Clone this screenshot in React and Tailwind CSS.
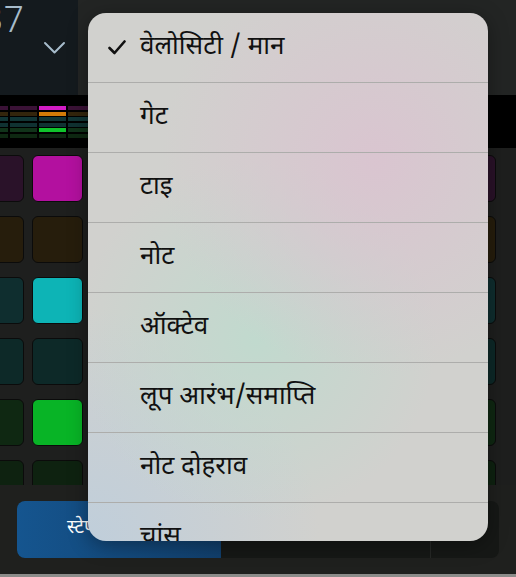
import React from "react";

const padRows = [
  { dim: "bg-[#2a1229]", lit: "bg-[#b3109f]", litCol: 1 },
  { dim: "bg-[#261d0c]", lit: null, litCol: -1 },
  { dim: "bg-[#0f2e2f]", lit: "bg-[#0db4b6]", litCol: 1 },
  { dim: "bg-[#0d2928]", lit: null, litCol: -1 },
  { dim: "bg-[#0f2812]", lit: "bg-[#08b426]", litCol: 1 },
  { dim: "bg-[#0e2210]", lit: null, litCol: -1 },
];

const meterRows = [
  { dim: "bg-[#3a1236]", lit: "bg-[#d21cc4]" },
  { dim: "bg-[#33250c]", lit: "bg-[#d27a08]" },
  { dim: "bg-[#113636]", lit: "bg-[#113636]" },
  { dim: "bg-[#103232]", lit: "bg-[#103232]" },
  { dim: "bg-[#11331a]", lit: "bg-[#10c42c]" },
  { dim: "bg-[#0e2812]", lit: "bg-[#0e2812]" },
];

const items = [
  "वेलोसिटी / मान",
  "गेट",
  "टाइ",
  "नोट",
  "ऑक्टेव",
  "लूप आरंभ/समाप्ति",
  "नोट दोहराव",
  "चांस",
];

export default function App() {
  return (
    <div
      className="relative w-[516px] h-[577px] overflow-hidden bg-[#1e1f1e] flex flex-col"
      style={{ fontFamily: '"Noto Sans Devanagari", "Lohit Devanagari", "Noto Sans", "Liberation Sans", sans-serif' }}
    >
      {/* header */}
      <div className="flex h-[95px] shrink-0">
        <div className="relative w-[78px] h-full bg-[#141a1e] overflow-hidden">
          <div className="ml-[-17px] mt-[5px] text-[37px] leading-[37px] font-light text-[#a7bccb]">37</div>
          <svg className="absolute left-[43px] top-[40px]" width="23" height="15" viewBox="0 0 23 15">
            <path d="M2 3 L11.5 12.5 L21 3" fill="none" stroke="#a7bccb" strokeWidth="2" strokeLinecap="round" strokeLinejoin="round" />
          </svg>
        </div>
        <div className="flex-1 bg-[#232524]" />
      </div>

      {/* meter strip */}
      <div className="h-[53px] shrink-0 bg-black flex pt-[11px] gap-[2px] ml-[-19px]">
        {[0, 1, 2, 3].map((c) => (
          <div key={c} className="w-[27px] flex flex-col gap-[1.6px]">
            {meterRows.map((r, i) => (
              <div key={i} className={`h-[4px] ${c === 2 ? r.lit : r.dim}`} />
            ))}
          </div>
        ))}
      </div>

      {/* pads */}
      <div className="h-[337px] shrink-0 overflow-hidden flex flex-col gap-[14px] pt-[7px] ml-[-27px]">
        {padRows.map((r, ri) => (
          <div key={ri} className="flex gap-[8px] shrink-0">
            {Array.from({ length: 9 }).map((_, ci) => (
              <div
                key={ci}
                className={`w-[51px] h-[47px] shrink-0 rounded-[6px] border-[1.5px] border-[#0b0b0b] ${ci === r.litCol ? r.lit : r.dim}`}
              />
            ))}
          </div>
        ))}
      </div>

      {/* bottom bar */}
      <div className="flex-1 bg-[#1f201e] pt-[16px] px-[17px]">
        <div className="h-[57px] rounded-[8px] bg-[#161816] flex overflow-hidden">
          <div className="w-[204px] bg-gradient-to-r from-[#15558f] to-[#113f6c] flex items-center pl-[50px] text-white text-[19px]">
            स्टेप
          </div>
          <div className="flex-1" />
          <div className="w-px bg-[#262826]" />
          <div className="w-[68px]" />
        </div>
      </div>
      <div className="h-[3px] shrink-0 bg-[#8c8c8a]" />

      {/* menu */}
      <div
        className="absolute left-[88px] top-[13px] w-[400px] h-[528px] rounded-[18px] overflow-hidden shadow-[0_4px_20px_rgba(0,0,0,0.35)]"
        style={{
          background:
            "radial-gradient(circle at 72% 28%, rgba(218,196,208,0.95) 0%, rgba(218,196,208,0) 45%), radial-gradient(circle at 42% 62%, rgba(192,218,206,0.95) 0%, rgba(192,218,206,0) 45%), radial-gradient(circle at 0% 100%, rgba(190,206,220,0.9) 0%, rgba(190,206,220,0) 35%), #d1d1ce",
        }}
      >
        {items.map((t, i) => (
          <div
            key={i}
            className={`flex items-center ${i === 0 ? "h-[69px]" : "h-[70px] border-t border-[#adadab]"} shrink-0`}
          >
            <div className="w-[52px] flex justify-end pr-[14px]">
              {i === 0 && (
                <svg width="18" height="15" viewBox="0 0 18 15">
                  <path d="M1.5 8 L6.5 13 L16.5 1.5" fill="none" stroke="#111" strokeWidth="2.6" strokeLinecap="round" strokeLinejoin="round" />
                </svg>
              )}
            </div>
            <span className="text-[26px] text-[#111] leading-none">{t}</span>
          </div>
        ))}
      </div>
    </div>
  );
}
